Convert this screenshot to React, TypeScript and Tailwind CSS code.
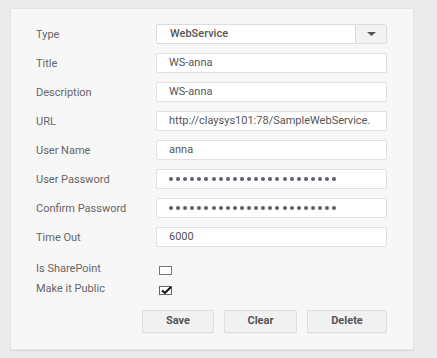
import React from "react";

const labelCls = "text-[11px] text-[#666] leading-none";
const inputCls =
  "h-[20px] w-[231px] bg-white border border-[#e1e1e1] rounded-[2px] flex items-center pl-[12px] text-[11px] text-[#555] overflow-hidden whitespace-nowrap";

function Row({ label, children }: { label: string; children: React.ReactNode }) {
  return (
    <div className="flex items-center h-[20px]">
      <div className={`w-[120px] ${labelCls}`}>{label}</div>
      {children}
    </div>
  );
}

function Field({ value }: { value: string }) {
  return <div className={inputCls}>{value}</div>;
}

function Dots() {
  return (
    <div className={inputCls}>
      <div className="flex items-center gap-[3.1px]">
        {Array.from({ length: 24 }).map((_, i) => (
          <span key={i} className="block w-[4px] h-[4px] rounded-full bg-[#5a5f6a]" />
        ))}
      </div>
    </div>
  );
}

export default function App() {
  return (
    <div
      className="w-[437px] h-[358px] bg-[#ebebeb] pt-[8px] pl-[10px]"
      style={{ fontFamily: "Roboto, 'Liberation Sans', sans-serif" }}
    >
      <div className="w-[404px] h-[342px] bg-[#f7f7f7] border border-[#e6e6e6] shadow-[0_1px_1px_rgba(0,0,0,0.08)] rounded-[2px] pl-[25px] pt-[15px]">
        <div className="flex flex-col gap-[9px]">
          <Row label="Type">
            <div className="h-[20px] w-[231px] bg-white border border-[#dcdcdc] rounded-[2px] flex items-stretch text-[11px] text-[#555] font-medium">
              <div className="flex-1 flex items-center pl-[13px]">WebService</div>
              <div className="w-[31px] bg-[#f2f2f2] border-l border-[#dcdcdc] flex items-center justify-center">
                <svg width="9" height="5" viewBox="0 0 9 5">
                  <path d="M0 0 L9 0 L4.5 4 Z" fill="#555" />
                </svg>
              </div>
            </div>
          </Row>
          <Row label="Title">
            <Field value="WS-anna" />
          </Row>
          <Row label="Description">
            <Field value="WS-anna" />
          </Row>
          <Row label="URL">
            <Field value="http://claysys101:78/SampleWebService." />
          </Row>
          <Row label="User Name">
            <Field value="anna" />
          </Row>
          <Row label="User Password">
            <Dots />
          </Row>
          <Row label="Confirm Password">
            <Dots />
          </Row>
          <Row label="Time Out">
            <Field value="6000" />
          </Row>
        </div>
        <div className="mt-[16px] flex flex-col gap-[7px]">
          <div className="flex items-start h-[13px]">
            <div className={`w-[123px] ${labelCls} text-[10.5px]`}>Is SharePoint</div>
            <div className="mt-[3px] w-[13px] h-[9px] border border-[#777] bg-white" />
          </div>
          <div className="flex items-start h-[13px]">
            <div className={`w-[123px] ${labelCls} text-[10.5px]`}>Make it Public</div>
            <div className="mt-[3px] w-[13px] h-[9px] border border-[#666] bg-white relative">
              <svg className="absolute left-[1px] top-[-1px]" width="11" height="9" viewBox="0 0 11 9">
                <path d="M1 4.5 L4 7 L10 1" stroke="#111" strokeWidth="2" fill="none" />
              </svg>
            </div>
          </div>
        </div>
        <div className="mt-[14px] flex gap-[10px] pl-[106px]">
          {[
            ["Save", "w-[72px]"],
            ["Clear", "w-[73px]"],
            ["Delete", "w-[80px]"],
          ].map(([t, w]) => (
            <button
              key={t}
              className={`${w} h-[23px] bg-[#f1f1f1] border border-[#dedede] rounded-[2px] text-[11px] font-bold text-[#555] shadow-[0_1px_0_rgba(0,0,0,0.04)]`}
            >
              {t}
            </button>
          ))}
        </div>
      </div>
    </div>
  );
}
